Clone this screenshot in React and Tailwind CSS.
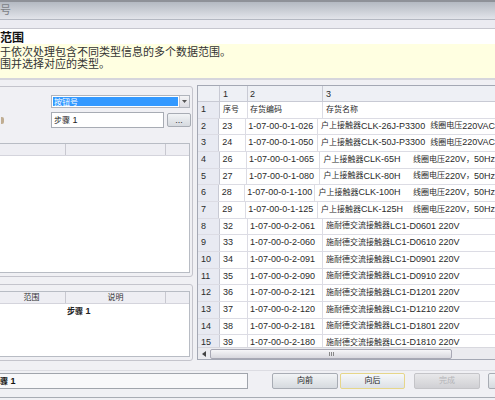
import React from 'react'

const CJK = /([\u3000-\u9fff\uff00-\uffef]+)/

// CJK runs are drawn a bit smaller than the latin text, as in the screenshot
const T = ({ s }) =>
  s.split(CJK).map((p, i) =>
    CJK.test(p) ? <span key={i} className="text-[8px]">{p}</span> : p
  )

const rows = [
  ['序号', '存货编码', '存货名称'],
  ['23', '1-07-00-0-1-026', '户上接触器CLK-26J-P3300  线圈电压220VAC'],
  ['24', '1-07-00-0-1-050', '户上接触器CLK-50J-P3300  线圈电压220VAC'],
  ['26', '1-07-00-0-1-065', '户上接触器CLK-65H     线圈电压220V，50Hz'],
  ['27', '1-07-00-0-1-080', '户上接触器CLK-80H     线圈电压220V，50Hz'],
  ['28', '1-07-00-0-1-100', '户上接触器CLK-100H     线圈电压220V，50Hz'],
  ['29', '1-07-00-0-1-125', '户上接触器CLK-125H    线圈电压220V，50Hz'],
  ['32', '1-07-00-0-2-061', '施耐德交流接触器LC1-D0601 220V'],
  ['33', '1-07-00-0-2-060', '施耐德交流接触器LC1-D0610 220V'],
  ['34', '1-07-00-0-2-091', '施耐德交流接触器LC1-D0901 220V'],
  ['35', '1-07-00-0-2-090', '施耐德交流接触器LC1-D0910 220V'],
  ['36', '1-07-00-0-2-121', '施耐德交流接触器LC1-D1201 220V'],
  ['37', '1-07-00-0-2-120', '施耐德交流接触器LC1-D1210 220V'],
  ['38', '1-07-00-0-2-181', '施耐德交流接触器LC1-D1801 220V'],
  ['39', '1-07-00-0-2-180', '施耐德交流接触器LC1-D1810 220V'],
]

const ListHeader = ({ a, b }) => (
  <div className="h-[12px] flex bg-[#eeeef3] border-b border-[#d4d4dc] text-[#333] leading-[11px]">
    <div className="w-[68px] border-r border-[#c8c8d0] text-center"><T s={a} /></div>
    <div className="w-[100px] border-r border-[#c8c8d0] text-center"><T s={b} /></div>
    <div className="flex-1" />
  </div>
)

const Btn = ({ label, focus, disabled, w = 'w-[66px]' }) => (
  <div
    className={
      'h-[16px] shrink-0 flex items-center justify-center rounded-[2px] border ' + w + ' ' +
      (disabled
        ? 'border-[#c4c4c8] bg-linear-to-b from-[#e8e8ea] to-[#d0d0d4] text-[#b4b4b8]'
        : focus
          ? 'border-[#e6d68a] bg-linear-to-b from-[#f6f8fa] to-[#dde1e6] text-[#222]'
          : 'border-[#a8acb4] bg-linear-to-b from-[#f2f4f6] to-[#d6dadf] text-[#222]')
    }
  >
    <T s={label} />
  </div>
)

export default function App() {
  return (
    <div className="w-[495px] h-[400px] overflow-hidden flex flex-col bg-[#f0f0f4] text-[9px] font-['Liberation_Sans','Noto_Sans_CJK_SC',sans-serif]">
      {/* title bar */}
      <div className="h-[2px] shrink-0 bg-[#8e9198]" />
      <div className="h-[17px] shrink-0 bg-linear-to-b from-[#b4b9c2] to-[#e2e4ea] text-[11px] text-[#7c7f86] leading-[17px]">号</div>
      <div className="h-[1px] shrink-0 bg-[#b4b8c2]" />
      <div className="h-[8px] shrink-0 bg-[#ebebf1]" />
      <div className="h-[1px] shrink-0 bg-[#c6c6ce]" />
      <div className="h-[15px] shrink-0 bg-white text-[12px] font-bold text-[#111] leading-[16px] pt-[1px]">范围</div>
      <div className="h-[34px] shrink-0 bg-[#ffffe1] text-[11px] leading-[12px] text-[#333] pt-[2px]">
        <div>于依次处理包含不同类型信息的多个数据范围。</div>
        <div>围并选择对应的类型。</div>
      </div>
      <div className="h-[2px] shrink-0 bg-[#d6d6dc]" />

      {/* main area */}
      <div className="h-[290px] shrink-0 flex gap-[4px]">
        <div className="w-[193px] shrink-0 flex flex-col pt-[6px] gap-[7px]">
          {/* group 1 */}
          <div className="h-[191px] -ml-[4px] pl-[4px] border border-[#c4c4cc] rounded-[3px] flex flex-col pr-[2px] pt-[8px]">
            <div className="flex items-center h-[13px]">
              <div className="w-[50px] shrink-0" />
              <div className="w-[140px] h-[13px] flex border border-[#b0b4bc] bg-white">
                <div className="flex-1 m-[1px] bg-[#3399ff] text-white leading-[10px] pl-[1px]"><T s="按钮号" /></div>
                <div className="w-[10px] bg-linear-to-b from-[#f4f4f6] to-[#dcdce2] border-l border-[#c4c4cc] flex items-center justify-center">
                  <svg width="5" height="3" viewBox="0 0 5 3"><path d="M0 0h5L2.5 3z" fill="#555" /></svg>
                </div>
              </div>
            </div>
            <div className="flex items-center h-[16px] mt-[4px]">
              <div className="w-[50px] shrink-0 flex items-center">
                <div className="w-[3px] h-[7px] rounded-r-[2px] bg-[#a08050] opacity-60" />
              </div>
              <div className="w-[113px] shrink-0 h-[16px] border border-[#a8acb4] bg-white text-[#222] leading-[14px] pl-[2px]">
                <T s="步骤 1" />
              </div>
              <div className="w-[24px] shrink-0 h-[14px] ml-[3px] border border-[#a8acb4] rounded-[2px] bg-linear-to-b from-[#f2f4f6] to-[#d6dadf] text-center leading-[12px] text-[#333]">...</div>
            </div>
            <div className="mt-[15px] h-[130px] -ml-[4px] border border-[#b8bcc4] bg-white flex flex-col">
              <ListHeader a="" b="" />
              <div className="flex-1" />
            </div>
          </div>

          {/* group 2 */}
          <div className="h-[77px] -ml-[4px] pl-[4px] border border-[#c4c4cc] rounded-[3px] flex flex-col pr-[2px] pt-[6px]">
            <div className="h-[66px] -ml-[4px] border border-[#b8bcc4] bg-white flex flex-col">
              <ListHeader a="范围" b="说明" />
              <div className="h-[16px] flex items-center font-bold text-[#222]">
                <div className="w-[68px]" />
                <div className="pl-[1px]"><T s="步骤 1" /></div>
              </div>
            </div>
          </div>
        </div>

        {/* data grid */}
        <div className="flex-1 mt-[5px] h-[275px] flex flex-col border border-[#a4a8b4] border-r-0 bg-white overflow-hidden text-[#2a2a2a]">
          <div className="h-[16px] shrink-0 flex bg-[#eef0f5] border-b border-[#c8cad4] leading-[16px]">
            <div className="w-[22px] border-r border-[#c8cad4]" />
            <div className="w-[28px] border-r border-[#c8cad4] pl-[3px]">1</div>
            <div className="w-[75px] border-r border-[#c8cad4] pl-[2px]">2</div>
            <div className="flex-1 pl-[3px]">3</div>
          </div>
          <div className="flex-1 overflow-hidden">
            {rows.map((r, i) => (
              <div key={i} className="h-[16.67px] flex border-b border-[#dcdce4] items-center">
                <div className="w-[22px] h-full flex items-center bg-[#e8eaf2] border-r border-[#c8cad4] pl-[3px]">{i + 1}</div>
                <div className="w-[28px] h-full flex items-center border-r border-[#dcdce4] pl-[3px]"><T s={r[0]} /></div>
                <div className="w-[75px] h-full flex items-center border-r border-[#dcdce4] pl-[2px]"><T s={r[1]} /></div>
                <div className="flex-1 h-full flex items-center pl-[3px] whitespace-pre"><T s={r[2]} /></div>
              </div>
            ))}
          </div>
          <div className="h-[12px] shrink-0 flex items-center bg-[#ebebef] border-t border-[#d8d8de]">
            <div className="w-[12px] flex justify-center">
              <svg width="4" height="6" viewBox="0 0 4 6"><path d="M4 0v6L0 3z" fill="#444" /></svg>
            </div>
            <div className="w-[242px] h-[10px] rounded-[2px] border border-[#a8a8b4] bg-linear-to-b from-[#f6f6f8] to-[#d8d8de] flex items-center justify-center gap-[1px]">
              <div className="w-[1px] h-[4px] bg-[#888]" />
              <div className="w-[1px] h-[4px] bg-[#888]" />
              <div className="w-[1px] h-[4px] bg-[#888]" />
            </div>
          </div>
        </div>
      </div>

      {/* bottom bar */}
      <div className="h-[1px] shrink-0 bg-[#dcdce2]" />
      <div className="h-[26px] shrink-0 flex items-start pt-[2px] overflow-hidden">
        <div className="w-[250px] shrink-0 h-[16px] -ml-[2px] border border-[#a0a4ac] bg-[#f8f8fa] font-bold text-[#111] leading-[14px] pl-[1px]">
          <T s="骤 1" />
        </div>
        <div className="ml-[24px] shrink-0 flex gap-[2px]">
          <Btn label="向前" />
          <Btn label="向后" focus w="w-[65px]" />
        </div>
        <div className="ml-[9px] shrink-0 flex gap-[8px]">
          <Btn label="完成" disabled />
          <Btn label="" />
        </div>
      </div>
      <div className="h-[1px] shrink-0 bg-[#a8acb4]" />
      <div className="flex-1 bg-[#f0f0f4]" />
    </div>
  )
}
